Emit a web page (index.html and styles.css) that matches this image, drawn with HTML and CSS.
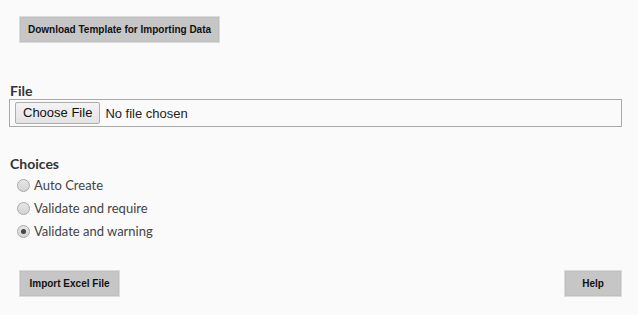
FILE: index.html
```html
<!DOCTYPE html>
<html lang="en">
<head>
    <meta charset="UTF-8">
    <meta name="viewport" content="width=device-width, initial-scale=1.0">
    <title>Import Data</title>
    <link rel="stylesheet" href="styles.css">
</head>
<body>
    <div class="content">
        <div class="top-row">
            <button class="action-button download">Download Template for Importing Data</button>
        </div>

        <div class="field">
            <label class="field-label">File</label>
            <div class="file-box">
                <span class="choose-button">Choose File</span>
                <span class="file-name">No file chosen</span>
            </div>
        </div>

        <div class="field">
            <label class="field-label">Choices</label>
            <div class="choices">
                <label class="choice"><span class="radio"></span>Auto Create</label>
                <label class="choice"><span class="radio"></span>Validate and require</label>
                <label class="choice"><span class="radio checked"></span>Validate and warning</label>
            </div>
        </div>

        <div class="bottom-row">
            <button class="action-button wide">Import Excel File</button>
            <button class="action-button help">Help</button>
        </div>
    </div>
</body>
</html>
```

FILE: styles.css
```css
body {
    font-family: Lato, "Open Sans", sans-serif;
    margin: 0;
    padding: 0;
    background-color: #fafafa;
    color: #333;
}
.content {
    width: 613px;
    padding: 16px 0 0 9px;
}
.top-row {
    padding-left: 10px;
}
.action-button {
    height: 27px;
    padding: 0;
    background-color: #c6c6c6;
    border: 1px solid #dcdcdc;
    box-shadow: inset 0 0 0 1px #c0c0c0;
    font-family: "Liberation Sans", Arial, sans-serif;
    font-size: 10px;
    font-weight: bold;
    color: #111;
    white-space: nowrap;
    cursor: pointer;
}
.action-button.download {
    width: 201px;
}
.action-button.wide {
    width: 101px;
}
.action-button.help {
    width: 58px;
}
.field {
    margin-top: 39px;
}
.field + .field {
    margin-top: 28px;
}
.field-label {
    display: block;
    font-size: 14px;
    font-weight: bold;
    color: #333;
    line-height: 17px;
    margin-left: 1px;
}
.file-box {
    display: flex;
    align-items: center;
    height: 26px;
    border: 1px solid #aaa;
    padding-left: 5px;
}
.choose-button {
    height: 20px;
    line-height: 20px;
    padding: 0 7px;
    border: 1px solid #adadad;
    border-radius: 2px;
    background: linear-gradient(#f4f4f4, #e3e3e3);
    font-family: "Liberation Sans", Arial, sans-serif;
    font-size: 13px;
    color: #111;
}
.file-name {
    margin-left: 5px;
    font-family: "Liberation Sans", Arial, sans-serif;
    font-size: 13px;
    color: #222;
}
.choices {
    display: flex;
    flex-direction: column;
    gap: 5px;
    padding: 4px 0 0 8px;
}
.choice {
    display: flex;
    align-items: center;
    height: 18px;
    font-size: 13px;
    color: #444;
}
.radio {
    width: 11px;
    height: 11px;
    border-radius: 50%;
    border: 1px solid #a9a9a9;
    background: linear-gradient(#e6e6e6, #d4d4d4);
    margin-right: 4px;
    position: relative;
}
.radio.checked::after {
    content: "";
    position: absolute;
    left: 3px;
    top: 3px;
    width: 5px;
    height: 5px;
    border-radius: 50%;
    background-color: #444;
}
.bottom-row {
    display: flex;
    justify-content: space-between;
    padding-left: 10px;
    margin-top: 30px;
}
```
